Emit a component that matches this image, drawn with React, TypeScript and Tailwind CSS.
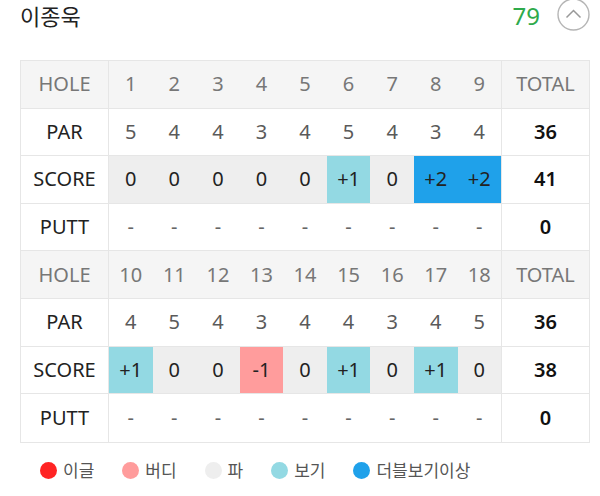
import React from "react";

type Kind = "eagle" | "birdie" | "par" | "bogey" | "double";

const kindBg: Record<Kind, string> = {
  eagle: "bg-[#ff2424]",
  birdie: "bg-[#ff9c9c]",
  par: "bg-[#eeeeee]",
  bogey: "bg-[#93d9e3]",
  double: "bg-[#1fa1ea]",
};

function kindOf(v: number): Kind {
  if (v <= -2) return "eagle";
  if (v === -1) return "birdie";
  if (v === 0) return "par";
  if (v === 1) return "bogey";
  return "double";
}

function fmt(v: number) {
  if (v > 0) return `+${v}`;
  if (v < 0) return `-${Math.abs(v)}`;
  return "0";
}

type Half = {
  holes: number[];
  par: number[];
  score: number[];
  parTotal: number;
  scoreTotal: number;
  puttTotal: number;
};

const halves: Half[] = [
  {
    holes: [1, 2, 3, 4, 5, 6, 7, 8, 9],
    par: [5, 4, 4, 3, 4, 5, 4, 3, 4],
    score: [0, 0, 0, 0, 0, 1, 0, 2, 2],
    parTotal: 36,
    scoreTotal: 41,
    puttTotal: 0,
  },
  {
    holes: [10, 11, 12, 13, 14, 15, 16, 17, 18],
    par: [4, 5, 4, 3, 4, 4, 3, 4, 5],
    score: [1, 0, 0, -1, 0, 1, 0, 1, 0],
    parTotal: 36,
    scoreTotal: 38,
    puttTotal: 0,
  },
];

function Row({
  label,
  header,
  children,
  total,
  last,
}: {
  label: string;
  header?: boolean;
  children: React.ReactNode;
  total: React.ReactNode;
  last?: boolean;
}) {
  return (
    <div
      className={`flex h-[47.6px] ${last ? "" : "border-b border-[#e6e6e6]"} ${
        header ? "bg-[#f5f5f5]" : "bg-white"
      }`}
    >
      <div
        className={`w-[88px] shrink-0 border-r border-[#e6e6e6] flex items-center justify-center ${
          header ? "text-[#777]" : "text-[#222]"
        }`}
      >
        {label}
      </div>
      <div className="flex-1 flex">{children}</div>
      <div
        className={`w-[88px] shrink-0 border-l border-[#e6e6e6] flex items-center justify-center ${
          header ? "text-[#777]" : "text-[#111] font-semibold"
        }`}
      >
        {total}
      </div>
    </div>
  );
}

function Cell({ children, className = "" }: { children: React.ReactNode; className?: string }) {
  return (
    <div className={`flex-1 flex items-center justify-center ${className}`}>{children}</div>
  );
}

export default function App() {
  return (
    <div className="w-[600px] h-[496px] bg-white overflow-hidden font-['Noto_Sans','Noto_Sans_CJK_KR',sans-serif]">
      <div className="pl-[20px] pr-[10px]">
        <div className="flex items-center justify-between h-[32px]">
          <div className="text-[22px] text-[#222] leading-[30px]">이종욱</div>
          <div className="flex items-center">
            <span className="text-[24px] text-[#2eaa4b] leading-[32px] mr-[17px]">79</span>
            <svg width="33" height="33" viewBox="0 0 33 33" className="-mt-[3px]">
              <circle cx="16.5" cy="16.5" r="15.5" fill="none" stroke="#b5b5b5" strokeWidth="1.4" />
              <path d="M9.5 19.5 L16.5 12.5 L23.5 19.5" fill="none" stroke="#999" strokeWidth="1.5" />
            </svg>
          </div>
        </div>

        <div className="mt-[28px] border border-[#e6e6e6] text-[20px] leading-none">
          {halves.map((h, hi) => (
            <React.Fragment key={hi}>
              <Row label="HOLE" header total="TOTAL">
                {h.holes.map((n) => (
                  <Cell key={n} className="text-[#777]">
                    {n}
                  </Cell>
                ))}
              </Row>
              <Row label="PAR" total={h.parTotal}>
                {h.par.map((p, i) => (
                  <Cell key={i} className="text-[#5a5a5a]">
                    {p}
                  </Cell>
                ))}
              </Row>
              <Row label="SCORE" total={h.scoreTotal}>
                {h.score.map((s, i) => (
                  <Cell key={i} className={`text-[#222] ${kindBg[kindOf(s)]}`}>
                    {fmt(s)}
                  </Cell>
                ))}
              </Row>
              <Row label="PUTT" total={h.puttTotal} last={hi === 1}>
                {h.holes.map((n) => (
                  <Cell key={n} className="text-[#666]">
                    -
                  </Cell>
                ))}
              </Row>
            </React.Fragment>
          ))}
        </div>

        <div className="mt-[19px] pl-[20px] flex items-center text-[17px] text-[#555] leading-none">
          {[
            { k: "eagle" as Kind, t: "이글" },
            { k: "birdie" as Kind, t: "버디" },
            { k: "par" as Kind, t: "파" },
            { k: "bogey" as Kind, t: "보기" },
            { k: "double" as Kind, t: "더블보기이상" },
          ].map((it) => (
            <div key={it.t} className="flex items-center mr-[28px]">
              <span className={`w-[17px] h-[17px] rounded-full ${kindBg[it.k]} mr-[6px]`} />
              <span>{it.t}</span>
            </div>
          ))}
        </div>
      </div>
    </div>
  );
}
